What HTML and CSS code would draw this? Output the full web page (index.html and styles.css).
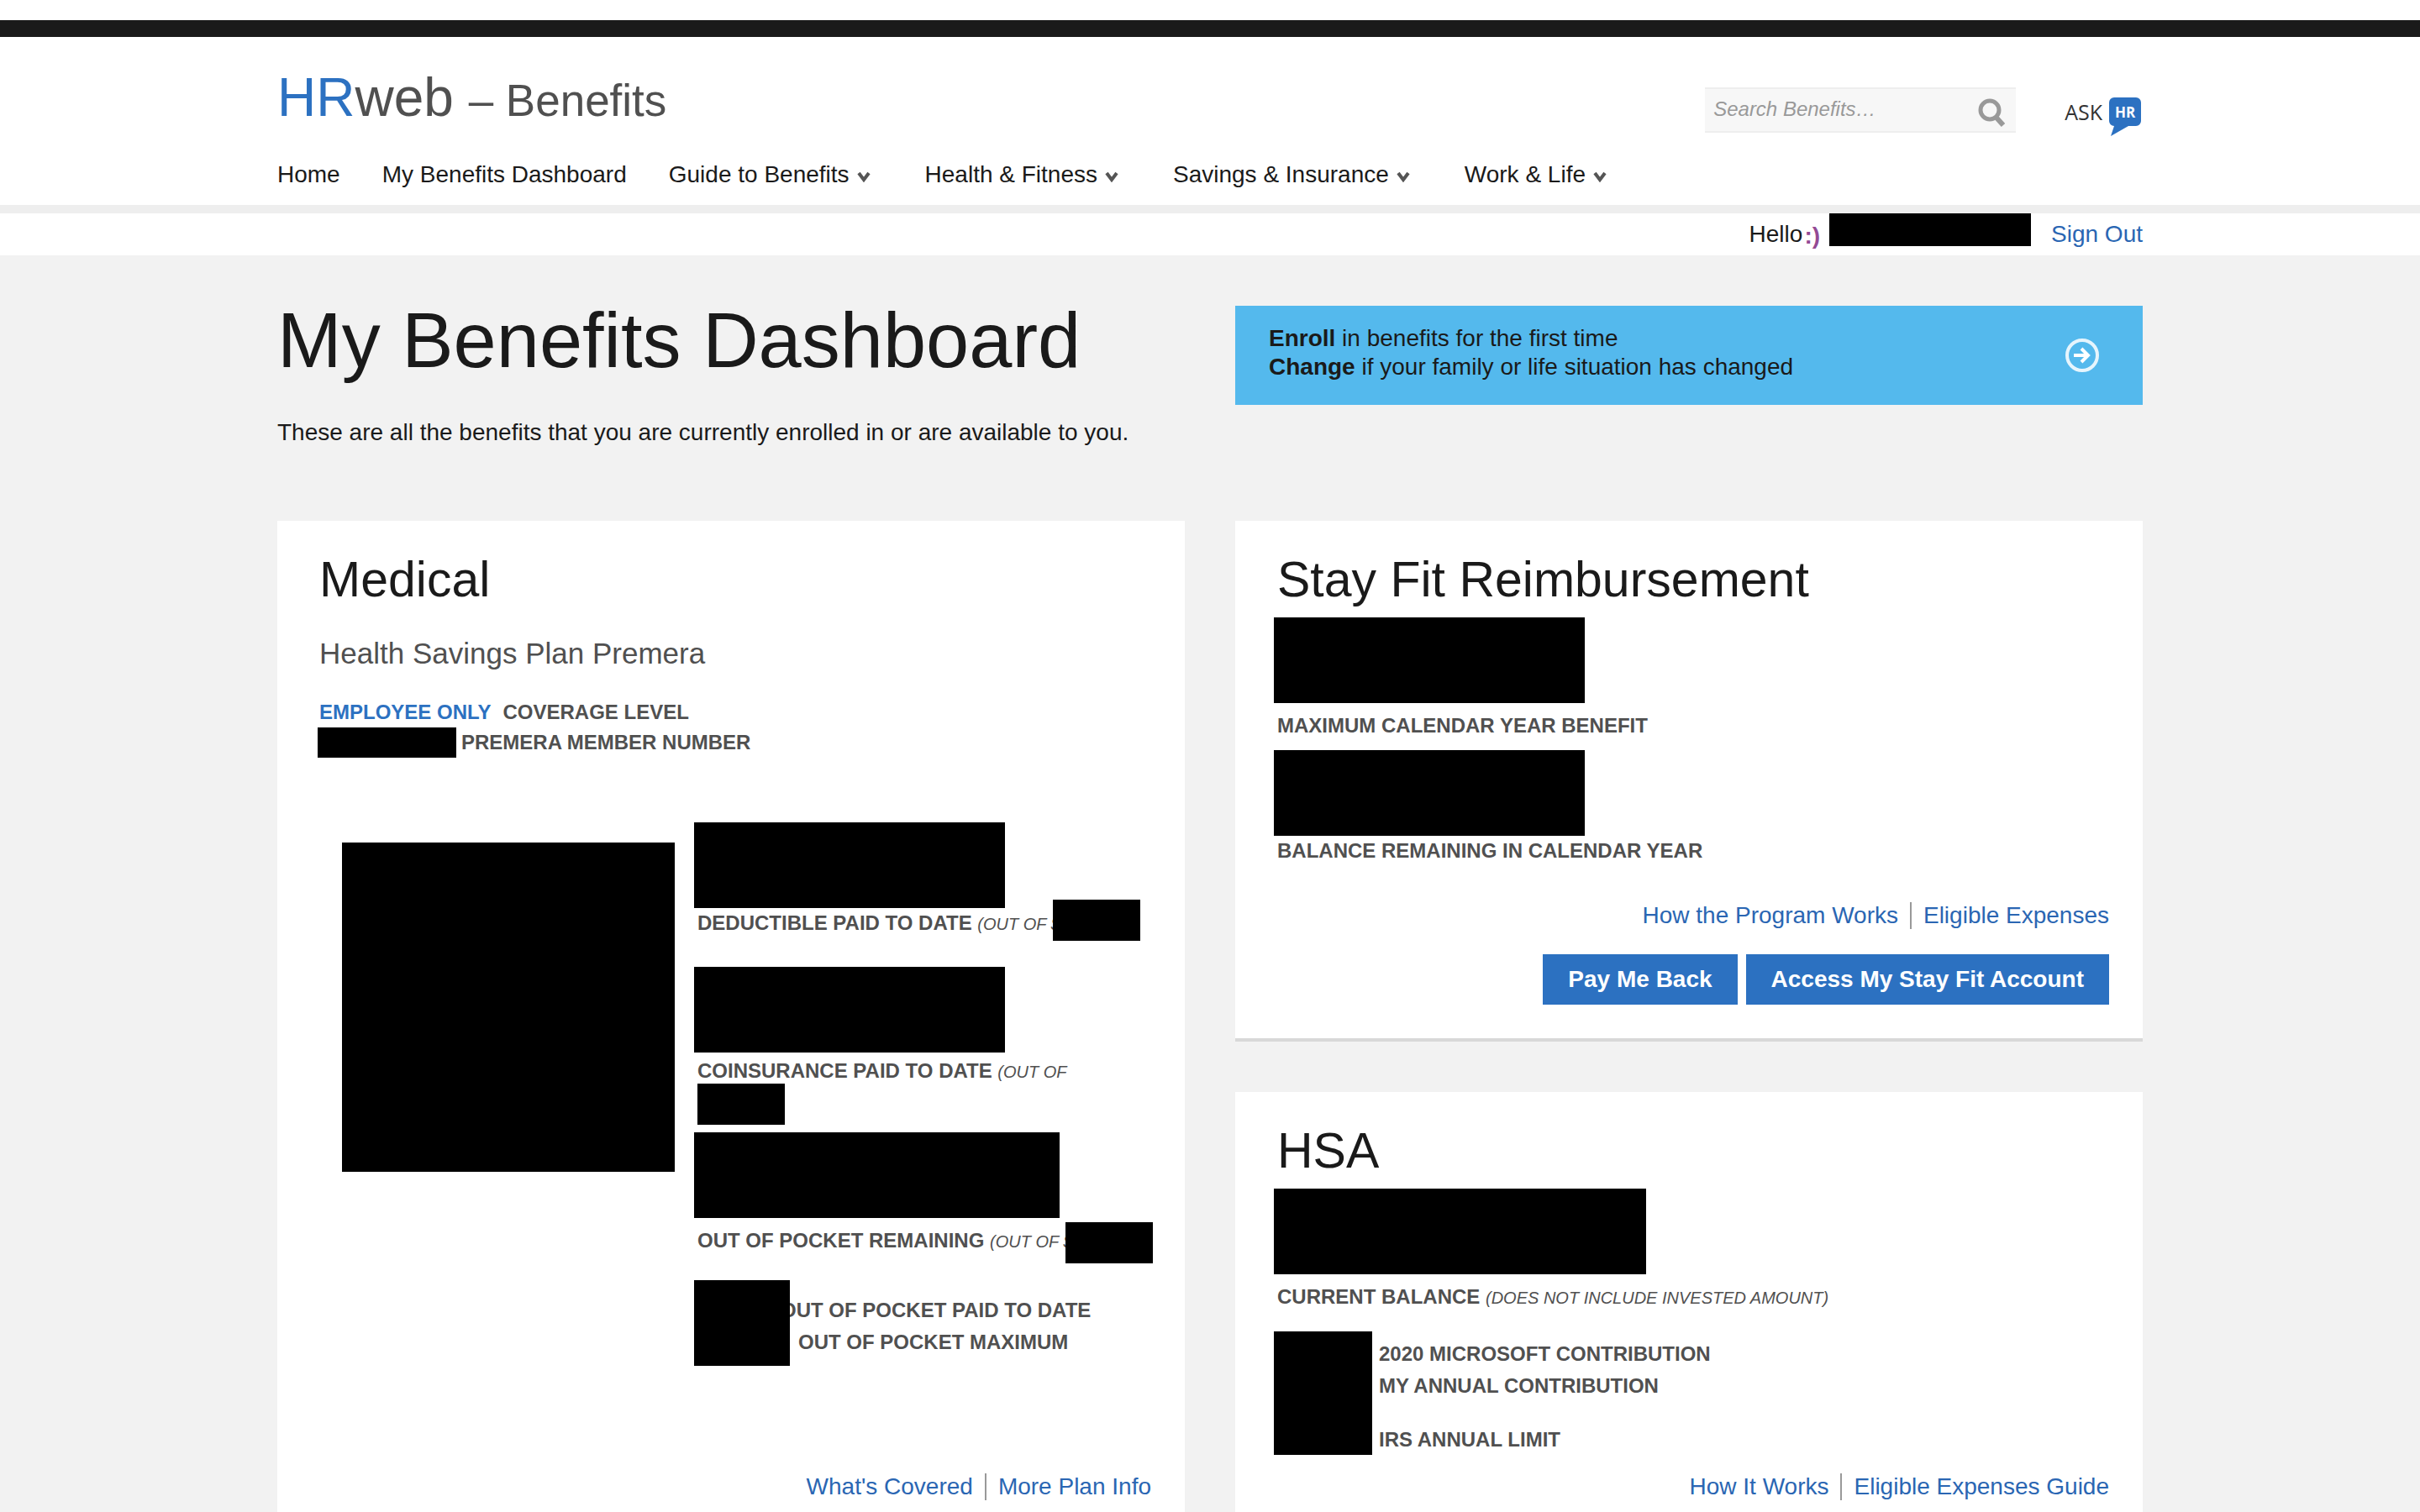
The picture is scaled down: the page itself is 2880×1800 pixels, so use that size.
FILE: index.html
```html
<!DOCTYPE html>
<html lang="en">
<head>
<meta charset="utf-8">
<meta name="viewport" content="width=device-width, initial-scale=1">
<title>HRweb – Benefits</title>
<link rel="stylesheet" href="styles.css">
</head>
<body>
<svg class="sprite" aria-hidden="true">
  <symbol id="chevron" viewBox="0 0 16 14"><path d="M2 3l6 8 6-8" fill="none" stroke="#555" stroke-width="4"/></symbol>
</svg>
<div class="topbar"></div>
<header class="header">
  <div class="wrap">
    <div class="brand-row">
      <a class="brand" href="#"><span class="brand-hr">HR</span>web <span class="brand-sub">– Benefits</span></a>
      <div class="tools">
        <form class="search">
          <input class="search-input" type="text" aria-label="Search Benefits" placeholder="Search Benefits…">
          <button class="search-button" type="button" aria-label="Search">
            <svg class="search-icon" viewBox="0 0 32 34"><circle cx="14" cy="14" r="11" fill="none" stroke="#999" stroke-width="5"/><path d="M21 22l9 10" stroke="#999" stroke-width="6"/></svg>
          </button>
        </form>
        <a class="ask" href="#" aria-label="Ask HR">
          <span class="ask-text">ASK</span>
          <svg class="ask-icon" viewBox="0 0 38 48"><path d="M6 0h26a6 6 0 0 1 6 6v22a6 6 0 0 1-6 6h-9L2 46l4-12a6 6 0 0 1-6-6V6a6 6 0 0 1 6-6z" fill="#2c71c1"/><text class="ask-hr" x="19" y="24" text-anchor="middle">HR</text></svg>
        </a>
      </div>
    </div>
    <nav class="nav">
      <a href="#">Home</a>
      <a href="#">My Benefits Dashboard</a>
      <a class="has-menu" href="#">Guide to Benefits<svg class="chevron"><use href="#chevron"/></svg></a>
      <a class="has-menu" href="#">Health &amp; Fitness<svg class="chevron"><use href="#chevron"/></svg></a>
      <a class="has-menu" href="#">Savings &amp; Insurance<svg class="chevron"><use href="#chevron"/></svg></a>
      <a class="has-menu" href="#">Work &amp; Life<svg class="chevron"><use href="#chevron"/></svg></a>
    </nav>
  </div>
</header>
<div class="userbar">
  <div class="wrap userbar-row">
    <span>Hello</span>
    <span class="smile">:)</span>
    <span class="redacted redacted-name"></span>
    <a class="link" href="#">Sign Out</a>
  </div>
</div>
<main class="wrap main">
  <section class="hero">
    <div>
      <h1 class="title">My Benefits Dashboard</h1>
      <p class="intro">These are all the benefits that you are currently enrolled in or are available to you.</p>
    </div>
    <a class="banner" href="#">
      <span><strong>Enroll</strong> in benefits for the first time<br><strong>Change</strong> if your family or life situation has changed</span>
      <svg class="banner-icon" viewBox="0 0 42 42"><circle cx="21" cy="21" r="18" fill="none" stroke="#e6f5fd" stroke-width="4"/><path d="M11 21h17M20 13l8 8-8 8" fill="none" stroke="#fff" stroke-width="4"/></svg>
    </a>
  </section>
  <div class="columns">
    <section class="card card-open">
      <h2 class="card-title">Medical</h2>
      <p class="plan">Health Savings Plan Premera</p>
      <p class="label"><span class="level">EMPLOYEE ONLY</span>COVERAGE LEVEL</p>
      <p class="member"><span class="redacted redacted-member"></span><span>PREMERA MEMBER NUMBER</span></p>
      <div class="medical-body">
        <div class="redacted chart"></div>
        <div class="metrics">
          <div class="metric">
            <div class="redacted amount"></div>
            <p class="label with-limit"><span>DEDUCTIBLE PAID TO DATE <em class="note">(OUT OF $</em></span><span class="redacted limit limit-high"></span></p>
          </div>
          <div class="metric">
            <div class="redacted amount"></div>
            <p class="label label-spaced">COINSURANCE PAID TO DATE <em class="note">(OUT OF</em></p>
            <span class="redacted limit limit-below"></span>
          </div>
          <div class="metric">
            <div class="redacted amount amount-medium"></div>
            <p class="label label-far with-limit"><span>OUT OF POCKET REMAINING <em class="note">(OUT OF $</em></span><span class="redacted limit"></span></p>
          </div>
          <div class="pocket">
            <div class="redacted pocket-amounts"></div>
            <ul class="pocket-list">
              <li>OUT OF POCKET PAID TO DATE</li>
              <li class="pocket-max">OUT OF POCKET MAXIMUM</li>
            </ul>
          </div>
        </div>
      </div>
      <div class="links links-medical"><a class="link" href="#">What's Covered</a><a class="link" href="#">More Plan Info</a></div>
    </section>
    <div class="stack">
      <section class="card card-closed">
        <h2 class="card-title">Stay Fit Reimbursement</h2>
        <div class="redacted amount amount-first"></div>
        <p class="label label-far">MAXIMUM CALENDAR YEAR BENEFIT</p>
        <div class="redacted amount amount-first"></div>
        <p class="label">BALANCE REMAINING IN CALENDAR YEAR</p>
        <div class="links links-fit"><a class="link" href="#">How the Program Works</a><a class="link" href="#">Eligible Expenses</a></div>
        <div class="actions"><button class="button" type="button">Pay Me Back</button><button class="button" type="button">Access My Stay Fit Account</button></div>
      </section>
      <section class="card card-open">
        <h2 class="card-title">HSA</h2>
        <div class="redacted amount amount-first amount-wide"></div>
        <p class="label label-far">CURRENT BALANCE <em class="note">(DOES NOT INCLUDE INVESTED AMOUNT)</em></p>
        <div class="hsa-body">
          <div class="redacted hsa-amounts"></div>
          <ul class="hsa-list">
            <li>2020 MICROSOFT CONTRIBUTION</li>
            <li>MY ANNUAL CONTRIBUTION</li>
            <li class="hsa-limit">IRS ANNUAL LIMIT</li>
          </ul>
        </div>
        <div class="links links-hsa"><a class="link" href="#">How It Works</a><a class="link" href="#">Eligible Expenses Guide</a></div>
      </section>
    </div>
  </div>
</main>
</body>
</html>
```
FILE: styles.css
```css
* { box-sizing: border-box; }
body {
  margin: 0;
  padding-top: 24px;
  background: linear-gradient(#fff 24px, #f2f2f2 24px);
  color: #1a1a1a;
  font-family: "Liberation Sans", Arial, sans-serif;
  font-size: 28px;
  line-height: 32px;
}
h1, h2, p, ul { margin: 0; padding: 0; }
h1, h2 { font-weight: normal; }
ul { list-style: none; }
a { color: inherit; text-decoration: none; }
svg { display: block; flex: none; }
.sprite { display: none; }
.wrap { width: calc(100% - 80px); max-width: 2220px; margin: 0 auto; }
.link { color: #2a66b3; }
.redacted { display: block; flex: none; background: #000; position: relative; z-index: 1; }

/* Header */
.topbar { height: 20px; background: #1a1a1a; }
.header { background: #fff; border-bottom: 10px solid #eee; padding: 32px 0 20px; }
.brand-row { display: flex; justify-content: space-between; align-items: flex-start; margin-bottom: 28px; }
.brand { color: #505050; font-size: 64px; line-height: 80px; white-space: nowrap; }
.brand-hr { color: #2c71c1; }
.brand-sub { font-size: 53px; }
.tools { display: flex; align-items: flex-start; gap: 58px; padding-top: 28px; }
.search { display: flex; width: 370px; height: 54px; background: #f7f7f7; border: solid #eee; border-width: 2px 0; }
.search-input { flex: 1; min-width: 0; border: 0; padding: 0 10px 2px; background: none; font: italic 24px "Liberation Sans", Arial, sans-serif; color: #505050; }
.search-input::placeholder { color: #999; opacity: 1; }
.search-button { border: 0; background: none; padding: 11px 13px 0 0; display: flex; }
.search-icon { width: 32px; height: 34px; }
.ask { display: flex; gap: 8px; padding-top: 12px; padding-right: 2px; }
.ask-text { font: 25px/34px "Open Sans", sans-serif; color: #333; }
.ask-icon { width: 38px; height: 48px; }
.ask-hr { font: bold 17px "Open Sans", sans-serif; fill: #fff; }
.nav { display: flex; gap: 50px; white-space: nowrap; }
.nav a { display: flex; align-items: center; }
.has-menu { padding-right: 15px; }
.chevron { width: 16px; height: 14px; margin: 4px 0 0 9px; }

.userbar { background: #fff; line-height: 50px; }
.userbar-row { display: flex; justify-content: flex-end; }
.smile { margin: 0 11px 0 2px; color: #934a94; font-size: 28px; font-weight: bold; line-height: 54px; height: 50px; }
.redacted-name { width: 240px; height: 39px; margin-right: 24px; }

/* Intro */
.main { padding-top: 60px; }
.hero, .columns { display: grid; grid-template-columns: repeat(2, minmax(0, 1fr)); gap: 60px; }
.hero { align-items: start; margin-bottom: 87px; }
.title { font-size: 92px; line-height: 82px; white-space: nowrap; }
.intro { margin-top: 51px; line-height: 36px; }
.banner { display: flex; justify-content: space-between; align-items: center; height: 118px; padding: 0 51px 0 40px; background: #54b9ed; line-height: 34px; }
.banner span { padding-bottom: 6px; }
.banner-icon { width: 42px; height: 42px; }

/* Cards */
.stack { display: grid; grid-template-rows: auto 1fr; gap: 60px; }
.card { background: #fff; padding: 34px 40px 14px 46px; }
.card-closed { border-bottom: 4px solid #d8d8d8; padding-bottom: 40px; }
.card-title { padding-left: 4px; font-size: 59px; line-height: 72px; }
.plan { margin: 32px 0; padding-left: 4px; color: #505050; font-size: 35px; line-height: 40px; }
.label, .member, .pocket, .hsa-body { color: #505050; font-size: 24px; font-weight: bold; line-height: 36px; white-space: nowrap; }
.label { padding-left: 4px; }
.label-spaced { padding-top: 4px; }
.label-far { padding-top: 9px; padding-bottom: 2px; }
.note { font-size: 20px; font-weight: normal; line-height: 20px; }
.level { color: #2c71c1; margin-right: 14px; }
.member { display: flex; gap: 6px; padding-left: 2px; }
.redacted-member { width: 165px; height: 36px; }
.amount { width: 370px; height: 102px; }
.amount-medium { width: 435px; }
.amount-wide { width: 443px; }
.amount-first { margin-top: 9px; }

.medical-body { display: flex; gap: 23px; margin-top: 77px; padding-left: 31px; }
.chart { width: 396px; height: 392px; margin-top: 24px; }
.metrics { flex: 1; min-width: 0; }
.metric:first-child { margin-bottom: 34px; }
.with-limit { display: flex; align-items: flex-start; }
.limit { width: 104px; height: 49px; margin: -4px 0 -9px -9px; }
.limit-high { margin-top: -10px; margin-bottom: -3px; }
.limit-below { margin: -3px 0 9px 4px; }
.pocket { display: flex; margin-top: 27px; line-height: 38px; }
.pocket-amounts { width: 114px; height: 102px; }
.pocket-list { margin-left: -11px; padding-top: 17px; }
.pocket-max { padding-left: 21px; }

.hsa-body { display: flex; gap: 8px; margin-top: 21px; line-height: 38px; }
.hsa-amounts { width: 117px; height: 147px; }
.hsa-list { padding-top: 8px; }
.hsa-limit { margin-top: 26px; }

.links { display: flex; justify-content: flex-end; }
.links .link + .link { margin-left: 14px; padding-left: 14px; border-left: 2px solid #999; }
.links-medical { margin-top: 128px; }
.links-fit { margin-top: 43px; }
.links-hsa { margin-top: 21px; }
.actions { display: flex; justify-content: flex-end; gap: 10px; margin-top: 30px; }
.button { height: 60px; padding: 0 30px; border: 0; background: #2c71c1; color: #fff; font: bold 28px/32px "Liberation Sans", Arial, sans-serif; }
```
